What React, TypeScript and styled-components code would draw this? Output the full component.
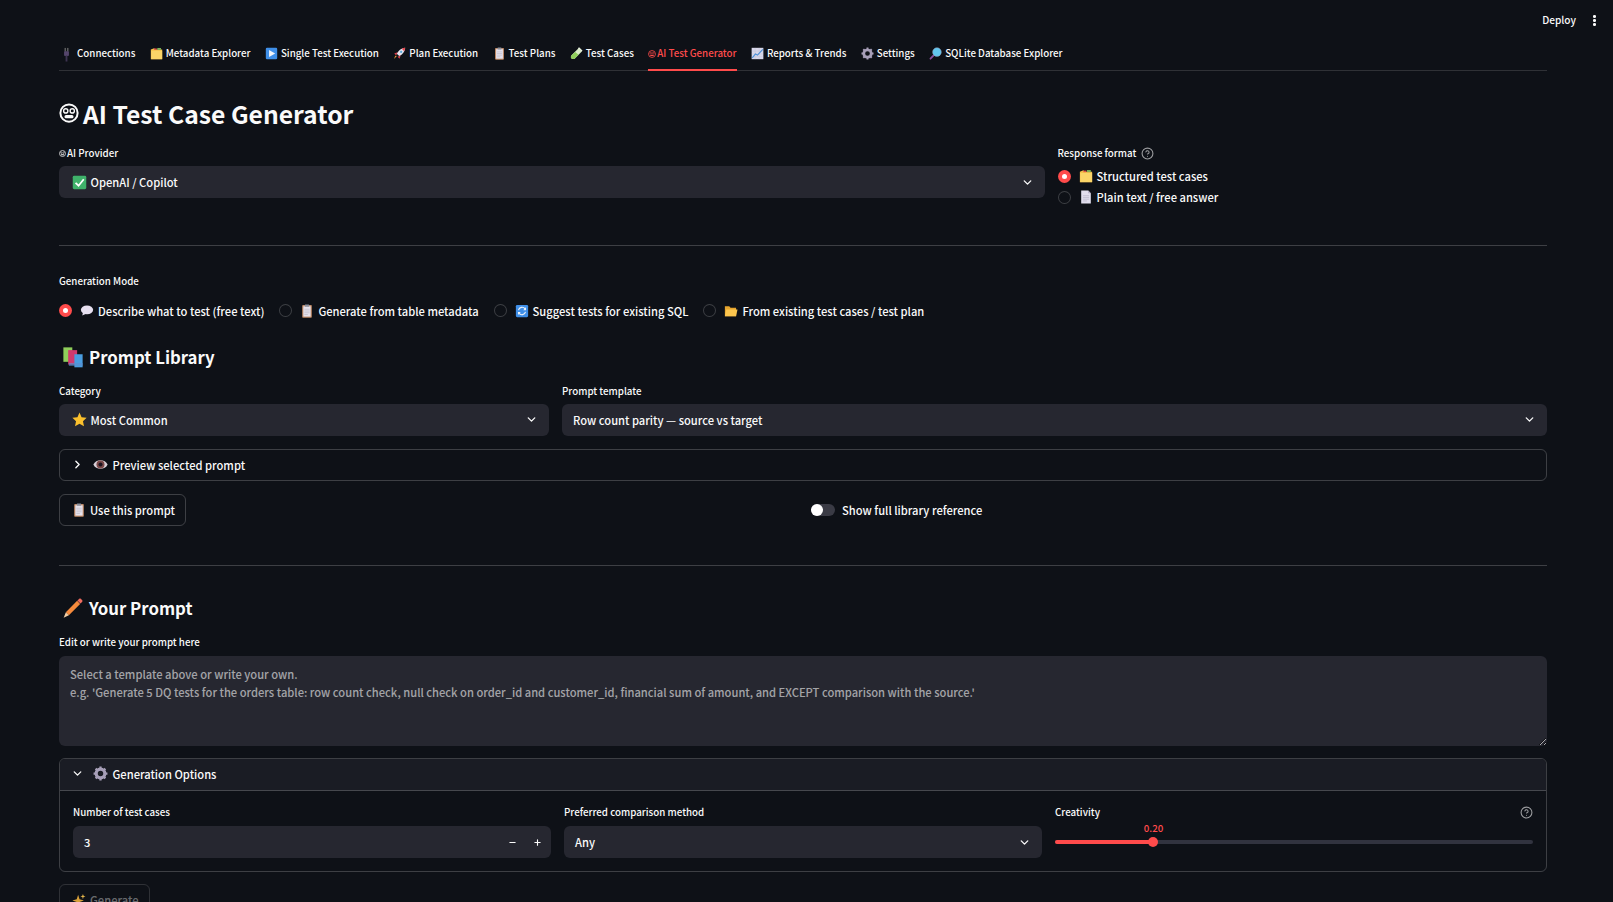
import React from "react";
import styled, { createGlobalStyle } from "styled-components";
import { ChevronDown, ChevronRight, CircleHelp, Minus, Plus } from "lucide-react";

const Global = createGlobalStyle`
  html, body { margin: 0; padding: 0; background: #0e1117; }
  * { box-sizing: border-box; }
  body { font-family: "Noto Sans CJK SC", "Noto Sans", sans-serif; color: #fafafa; font-weight: 500; }
`;

const Page = styled.div`
  position: relative;
  height: 902px;
  overflow: hidden;
  padding: 0 66px 0 59px;
  background: #0e1117;
`;
const TopActions = styled.div`
  position: absolute;
  top: 10px;
  right: 17px;
  display: flex;
  align-items: center;
  gap: 17px;
  font-size: 10.1px;
  line-height: 20px;
`;
const Kebab = styled.span`
  display: flex;
  flex-direction: column;
  gap: 1.2px;
  width: 3px;
  margin-top: 1px;
  i { display: block; width: 2.6px; height: 2.6px; border-radius: 50%; background: #fafafa; }
`;
const TabBar = styled.nav`
  display: flex;
  gap: 14.4px;
  margin-top: 36px;
  height: 35px;
  border-bottom: 1px solid rgba(250, 250, 250, 0.14);
`;
const Tab = styled.div<{ $active?: boolean }>`
  display: flex;
  align-items: flex-start;
  gap: ${(p) => (p.$active ? "1px" : "3px")};
  height: 35px;
  padding-top: 9px;
  font-size: 9.75px;
  line-height: 17px;
  white-space: nowrap;
  color: ${(p) => (p.$active ? "#ff4b4b" : "#fafafa")};
  border-bottom: 2px solid ${(p) => (p.$active ? "#ff4b4b" : "transparent")};
  svg { margin-top: ${(p) => (p.$active ? "4.5px" : "1.5px")}; }
`;
const Title = styled.h1`
  display: flex;
  align-items: center;
  gap: 4px;
  margin: 24px 0 0;
  font-size: 24.7px;
  line-height: 36px;
  font-weight: 700;
`;
const ProviderRow = styled.div`
  display: grid;
  grid-template-columns: 986px 1fr;
  gap: 12.5px;
  margin-top: 14px;
`;
const Label = styled.div`
  display: flex;
  align-items: center;
  gap: 1px;
  height: 16px;
  margin-bottom: 5px;
  font-size: 9.75px;
  line-height: 16px;
`;
const FieldLabel = styled(Label)`
  margin-bottom: 6px;
`;
const HelpRow = styled(Label)<{ $spread?: boolean }>`
  gap: 5px;
  justify-content: ${(p) => (p.$spread ? "space-between" : "flex-start")};
  margin-bottom: ${(p) => (p.$spread ? "6px" : "5px")};
`;
const Select = styled.div`
  display: flex;
  align-items: center;
  justify-content: space-between;
  height: 32px;
  padding: 0 11px;
  border-radius: 6px;
  background: #262730;
  font-size: 11.18px;
`;
const SelectValue = styled.span`
  display: flex;
  align-items: center;
  gap: 3.5px;
  white-space: nowrap;
  svg { margin-left: 2px; }
`;
const RadioStack = styled.div`
  display: flex;
  flex-direction: column;
  gap: 1px;
  margin-top: 1px;
`;
const RadioItem = styled.div`
  display: flex;
  align-items: center;
  height: 20px;
  font-size: 11.18px;
  white-space: nowrap;
`;
const RadioDot = styled.span<{ $on?: boolean }>`
  display: flex;
  align-items: center;
  justify-content: center;
  flex: none;
  width: 13px;
  height: 13px;
  margin-right: 8px;
  border-radius: 50%;
  background: ${(p) => (p.$on ? "#ff4b4b" : "#0e1117")};
  border: ${(p) => (p.$on ? "none" : "1px solid rgba(250,250,250,0.2)")};
  &::after {
    content: "";
    display: ${(p) => (p.$on ? "block" : "none")};
    width: 5px;
    height: 5px;
    border-radius: 50%;
    background: #fff;
  }
`;
const RadioText = styled.span`
  margin-left: 4px;
`;
const Divider = styled.hr<{ $top: number }>`
  margin: ${(p) => p.$top}px 0 0;
  height: 1px;
  border: none;
  background: rgba(250, 250, 250, 0.2);
`;
const ModeLabel = styled(Label)`
  margin: 27px 0 0;
`;
const RadioRow = styled.div`
  display: flex;
  gap: 15px;
  margin-top: 11.5px;
`;
const Heading = styled.h2<{ $top: number }>`
  display: flex;
  align-items: center;
  gap: 5px;
  margin: ${(p) => p.$top}px 0 0;
  padding-left: 3px;
  font-size: 16.8px;
  line-height: 28px;
  font-weight: 700;
`;
const LibraryRow = styled.div`
  display: grid;
  grid-template-columns: 490px 1fr;
  gap: 13px;
  margin-top: 11.5px;
`;
const Expander = styled.div`
  margin-top: 13.5px;
  border: 1px solid rgba(250, 250, 250, 0.2);
  border-radius: 6px;
  overflow: hidden;
`;
const ExpanderHead = styled.div<{ $open?: boolean }>`
  display: flex;
  align-items: center;
  height: ${(p) => (p.$open ? "32px" : "30px")};
  padding: 0 0 ${(p) => (p.$open ? "2px" : "1px")} 11px;
  font-size: 11.18px;
  background: ${(p) => (p.$open ? "#1a1c24" : "transparent")};
  border-bottom: ${(p) => (p.$open ? "1px solid rgba(250,250,250,0.2)" : "none")};
  span { display: flex; align-items: center; gap: 4.5px; margin-left: 9px; }
`;
const ActionRow = styled.div<{ $top?: number }>`
  display: grid;
  grid-template-columns: 752px 1fr;
  align-items: center;
  margin-top: ${(p) => p.$top ?? 13}px;
`;
const Button = styled.button<{ $disabled?: boolean }>`
  display: flex;
  align-items: center;
  gap: 4px;
  width: max-content;
  height: 32px;
  padding: 0 10px 0 12px;
  border: 1px solid rgba(250, 250, 250, ${(p) => (p.$disabled ? 0.14 : 0.2)});
  border-radius: 6px;
  background: transparent;
  color: ${(p) => (p.$disabled ? "rgba(250,250,250,0.4)" : "#fafafa")};
  font: inherit;
  font-size: 11.18px;
`;
const Toggle = styled.div`
  display: flex;
  align-items: center;
  gap: 7px;
  font-size: 11.18px;
`;
const ToggleTrack = styled.span`
  display: flex;
  align-items: center;
  width: 24px;
  height: 12px;
  border-radius: 6px;
  background: #3a3b45;
  &::before {
    content: "";
    width: 12px;
    height: 12px;
    border-radius: 50%;
    background: #fff;
  }
`;
const PromptField = styled.div`
  margin-top: 12px;
`;
const Prompt = styled.textarea`
  display: block;
  width: 100%;
  height: 90px;
  padding: 9px 11px;
  border: none;
  border-radius: 6px;
  background: #262730;
  color: #fafafa;
  font: inherit;
  font-size: 11.18px;
  line-height: 18px;
  resize: vertical;
  outline: none;
  &::placeholder { color: rgba(250, 250, 250, 0.6); opacity: 1; }
`;
const PromptExpander = styled(Expander)`
  margin-top: 12px;
`;
const OptionsBody = styled.div`
  display: grid;
  grid-template-columns: repeat(3, 478px);
  gap: 13px;
  padding: 13px 13px 13px;
`;
const NumberBox = styled(Select)`
  padding-right: 9px;
`;
const Steppers = styled.span`
  display: flex;
  gap: 16px;
  svg { display: block; }
`;
const Slider = styled.div`
  position: relative;
  height: 32px;
`;
const SliderValue = styled.span<{ $left: number }>`
  position: absolute;
  top: -5px;
  left: ${(p) => p.$left}px;
  transform: translateX(-50%);
  color: #ff4b4b;
  font-size: 9.75px;
  line-height: 14px;
`;
const SliderTrack = styled.div`
  position: absolute;
  top: 14px;
  left: 0;
  right: 0;
  height: 4px;
  border-radius: 2px;
  background: #31333f;
`;
const SliderFill = styled.div`
  height: 100%;
  border-radius: 2px 0 0 2px;
  background: #ff4b4b;
`;
const SliderThumb = styled.span`
  position: absolute;
  top: 11px;
  width: 10px;
  height: 10px;
  margin-left: -5px;
  border-radius: 50%;
  background: #ff4b4b;
`;

const Svg = styled.svg<{ $size: number }>`
  display: block;
  flex: none;
  width: ${(p) => p.$size}px;
  height: ${(p) => p.$size}px;
`;

type EmojiName =
  | "plug" | "index" | "play" | "rocket" | "clipboard" | "tube" | "robot" | "chart" | "gear"
  | "search" | "check" | "bubble" | "page" | "refresh" | "folder" | "books" | "star" | "eye"
  | "pencil" | "sparkles";

const shapes: Record<EmojiName, React.ReactNode> = {
  plug: (
    <>
      <rect x="6" y="1" width="1.2" height="4" fill="#777" />
      <rect x="8.8" y="1" width="1.2" height="4" fill="#777" />
      <rect x="5.4" y="4.5" width="5.2" height="5" rx="1" fill="#54456b" />
      <rect x="7" y="9" width="2" height="6.5" fill="#3c3350" />
    </>
  ),
  index: (
    <>
      <path d="M1 3 L5 1.5 L6.5 3 H15 V15 H1 Z" fill="#f5c04a" />
      <path d="M1.5 4.5 H15 V15 H1.5 Z" fill="#fbd568" />
      <rect x="9" y="1.2" width="4.5" height="2.4" fill="#7fb35a" />
      <rect x="5" y="1.8" width="3.4" height="1.8" fill="#e2574c" />
    </>
  ),
  play: (
    <>
      <rect x="1" y="1" width="14" height="14" rx="1.5" fill="#3f8fe8" />
      <path d="M5 3.8 L12.5 8 L5 12.2 Z" fill="#f3f5fa" />
    </>
  ),
  rocket: (
    <>
      <path d="M15 1 C10.5 1.3 6.6 4.3 4.8 8.4 L7.6 11.2 C11.7 9.4 14.7 5.5 15 1 Z" fill="#e3e3ee" />
      <path d="M15 1 C13.4 1.1 12 1.6 10.8 2.3 L13.7 5.2 C14.4 4 14.9 2.6 15 1 Z" fill="#e2474f" />
      <path d="M5.5 6.6 L1.5 8 L4 10.4 Z M9.4 10.5 L8 14.5 L5.6 12 Z" fill="#d8434d" />
      <path d="M4.8 11.2 L1.2 14.8 L2.8 10.8 Z" fill="#f39c3c" />
      <circle cx="10" cy="6" r="1.4" fill="#5aa7d8" />
    </>
  ),
  clipboard: (
    <>
      <rect x="2.5" y="1.2" width="11" height="14.4" rx="1" fill="#c08a66" />
      <rect x="3.8" y="2.6" width="8.4" height="11.8" fill="#e6e2ec" />
      <rect x="5.5" y=".6" width="5" height="2.6" rx=".6" fill="#8b8f9c" />
      <path d="M5 6h6M5 8h6M5 10h6M5 12h4" stroke="#b9b6c4" strokeWidth=".7" />
    </>
  ),
  tube: (
    <>
      <path d="M10.5 1.5 L14.5 5.5 L6 14 C4.8 15.2 2.4 14.9 1.5 13.9 C.7 12.9 1 11 2.2 9.8 Z" fill="#d9ecc6" />
      <path d="M6.5 6 L10.5 9.5 L6 14 C4.8 15.2 2.4 14.9 1.5 13.9 C.7 12.9 1 11 2.2 9.8 Z" fill="#8fce5a" />
      <rect x="9.4" y="1.6" width="6" height="2" transform="rotate(45 12 3)" fill="#e8f1dc" />
    </>
  ),
  robot: (
    <>
      <circle cx="8" cy="8" r="6.9" fill="none" stroke="currentColor" strokeWidth="1.6" />
      <circle cx="5.4" cy="6.3" r="1.7" fill="none" stroke="currentColor" strokeWidth="1.1" />
      <circle cx="10.6" cy="6.3" r="1.7" fill="none" stroke="currentColor" strokeWidth="1.1" />
      <rect x="4.4" y="9.6" width="7.2" height="2.6" rx="1.2" fill="currentColor" />
    </>
  ),
  chart: (
    <>
      <rect x=".8" y="1" width="14.4" height="14" fill="#d8d8ea" />
      <path d="M.8 5h14.4M.8 8.5h14.4M.8 12h14.4M5 1v14M10 1v14" stroke="#b7b7cf" strokeWidth=".4" />
      <path d="M1.5 13.5 L5.5 8.5 L8 10 L14.5 3" fill="none" stroke="#4a90d8" strokeWidth="1.4" />
    </>
  ),
  gear: (
    <>
      <circle cx="8" cy="8" r="4.6" fill="none" stroke="#a79fb8" strokeWidth="3.4" />
      <path
        d="M8 .6v3M8 12.4v3M.6 8h3M12.4 8h3M2.8 2.8l2.2 2.2M11 11l2.2 2.2M13.2 2.8L11 5M5 11l-2.2 2.2"
        stroke="#a79fb8"
        strokeWidth="2.4"
      />
    </>
  ),
  search: (
    <>
      <path d="M6 10 L1.8 14.4" stroke="#8a4f9e" strokeWidth="2.2" strokeLinecap="round" />
      <circle cx="9.8" cy="6.2" r="5.4" fill="#62c6ee" />
      <circle cx="9.8" cy="6.2" r="5.4" fill="none" stroke="#8a95b0" strokeWidth=".6" />
    </>
  ),
  check: (
    <>
      <rect x=".8" y=".8" width="14.4" height="14.4" rx="1.5" fill="#3fb26a" />
      <path d="M3.8 8.3 L7 11.4 L12.5 4.6" fill="none" stroke="#fff" strokeWidth="1.9" />
    </>
  ),
  bubble: (
    <>
      <ellipse cx="8" cy="6.7" rx="7" ry="4.9" fill="#e7e0f0" />
      <path d="M3.5 9.5 L2.6 13 L7 11 Z" fill="#e7e0f0" />
    </>
  ),
  page: (
    <>
      <path d="M2.5 .6 H10.5 L13.5 3.6 V15.4 H2.5 Z" fill="#e2dfee" />
      <path d="M10.5 .6 V3.6 H13.5 Z" fill="#b5afc6" />
      <path d="M4.5 6.5h7M4.5 8.5h7M4.5 10.5h7M4.5 12.5h4.5" stroke="#aaa6bd" strokeWidth=".6" />
    </>
  ),
  refresh: (
    <>
      <rect x="1" y="1" width="14" height="14" rx="1.5" fill="#3f8fe8" />
      <path d="M4 7 A4.2 4.2 0 0 1 11.5 5.5 M12 9 A4.2 4.2 0 0 1 4.5 10.5" fill="none" stroke="#eef3fb" strokeWidth="1.3" />
      <path d="M12.6 3.4 V7 H9.4 Z M3.4 12.6 V9 H6.6 Z" fill="#eef3fb" />
    </>
  ),
  folder: (
    <>
      <path d="M1 2.5 H6 L7.5 4.2 H13.8 V14 H1 Z" fill="#e6a52e" />
      <path d="M2.5 6.2 H15.4 L13.8 14 H1 Z" fill="#fcc64e" />
    </>
  ),
  books: (
    <>
      <rect x="1" y="1" width="6.5" height="10.5" fill="#8fce5a" />
      <rect x="4.5" y="3" width="6.5" height="10.5" fill="#d13a6e" />
      <rect x="9" y="6" width="6" height="9.5" fill="#4a9de0" />
      <rect x="5" y="12.4" width="10" height="2" fill="#5a8fd0" opacity=".7" />
    </>
  ),
  star: <path d="M8 .6 L10.2 5.5 L15.6 6.1 L11.7 9.8 L12.8 15.2 L8 12.5 L3.2 15.2 L4.3 9.8 L.4 6.1 L5.8 5.5 Z" fill="#fbc02d" />,
  eye: (
    <>
      <path d="M.4 8 C3 1.8 13 1.8 15.6 8 C13 14.2 3 14.2 .4 8 Z" fill="#d8d0d8" />
      <circle cx="8" cy="8" r="4.3" fill="#7c4a4a" />
      <circle cx="8" cy="8" r="2.2" fill="#1f1520" />
    </>
  ),
  pencil: (
    <>
      <path d="M11 2.8 L13.2 5 L5 13.2 L2.8 11 Z" fill="#f58a3c" />
      <path d="M11.2 2.6 L12.4 1.4 C12.8 1 13.4 1 13.8 1.4 L14.6 2.2 C15 2.6 15 3.2 14.6 3.6 L13.4 4.8 Z" fill="#ef6b5e" />
      <path d="M2.8 11 L5 13.2 L1.2 15 Z" fill="#f3cfa6" />
    </>
  ),
  sparkles: (
    <>
      <path d="M7 2 L8.6 7 L13.6 8.6 L8.6 10.2 L7 15 L5.4 10.2 L.4 8.6 L5.4 7 Z" fill="#d9a13a" />
      <path d="M12.5 1 L13.2 3.2 L15.4 4 L13.2 4.7 L12.5 7 L11.8 4.7 L9.6 4 L11.8 3.2 Z" fill="#e8b94e" />
    </>
  ),
};

const Emoji = ({ name, size = 14 }: { name: EmojiName; size?: number }) => (
  <Svg $size={size} viewBox="0 0 16 16" aria-hidden>
    {shapes[name]}
  </Svg>
);

const tabs: { icon: EmojiName; text: string; active?: boolean; size?: number }[] = [
  { icon: "plug", text: "Connections", size: 15 },
  { icon: "index", text: "Metadata Explorer" },
  { icon: "play", text: "Single Test Execution" },
  { icon: "rocket", text: "Plan Execution" },
  { icon: "clipboard", text: "Test Plans" },
  { icon: "tube", text: "Test Cases" },
  { icon: "robot", text: "AI Test Generator", active: true, size: 8 },
  { icon: "chart", text: "Reports & Trends" },
  { icon: "gear", text: "Settings" },
  { icon: "search", text: "SQLite Database Explorer" },
];

const modes: { icon: EmojiName; text: string; on?: boolean }[] = [
  { icon: "bubble", text: "Describe what to test (free text)", on: true },
  { icon: "clipboard", text: "Generate from table metadata" },
  { icon: "refresh", text: "Suggest tests for existing SQL" },
  { icon: "folder", text: "From existing test cases / test plan" },
];

const Chevron = () => <ChevronDown size={13} strokeWidth={2.5} />;

export default function App() {
  return (
    <Page>
      <Global />
      <TopActions>
        Deploy
        <Kebab>
          <i />
          <i />
          <i />
        </Kebab>
      </TopActions>

      <TabBar>
        {tabs.map((t) => (
          <Tab key={t.text} $active={t.active}>
            <Emoji name={t.icon} size={t.size ?? 13} />
            {t.text}
          </Tab>
        ))}
      </TabBar>

      <Title>
        <Emoji name="robot" size={20} />
        AI Test Case Generator
      </Title>

      <ProviderRow>
        <div>
          <Label>
            <Emoji name="robot" size={7} />
            AI Provider
          </Label>
          <Select>
            <SelectValue>
              <Emoji name="check" size={15} />
              OpenAI / Copilot
            </SelectValue>
            <Chevron />
          </Select>
        </div>
        <div>
          <HelpRow>
            Response format
            <CircleHelp size={13} color="rgba(250,250,250,0.6)" />
          </HelpRow>
          <RadioStack>
            <RadioItem>
              <RadioDot $on />
              <Emoji name="index" />
              <RadioText>Structured test cases</RadioText>
            </RadioItem>
            <RadioItem>
              <RadioDot />
              <Emoji name="page" />
              <RadioText>Plain text / free answer</RadioText>
            </RadioItem>
          </RadioStack>
        </div>
      </ProviderRow>

      <Divider $top={38} />

      <ModeLabel>Generation Mode</ModeLabel>
      <RadioRow>
        {modes.map((m) => (
          <RadioItem key={m.text}>
            <RadioDot $on={m.on} />
            <Emoji name={m.icon} />
            <RadioText>{m.text}</RadioText>
          </RadioItem>
        ))}
      </RadioRow>

      <Heading $top={22.5}>
        <Emoji name="books" size={22} />
        Prompt Library
      </Heading>

      <LibraryRow>
        <div>
          <Label>Category</Label>
          <Select>
            <SelectValue>
              <Emoji name="star" size={15} />
              Most Common
            </SelectValue>
            <Chevron />
          </Select>
        </div>
        <div>
          <Label>Prompt template</Label>
          <Select>
            <SelectValue>Row count parity — source vs target</SelectValue>
            <Chevron />
          </Select>
        </div>
      </LibraryRow>

      <Expander>
        <ExpanderHead>
          <ChevronRight size={13} strokeWidth={2.5} />
          <span>
            <Emoji name="eye" size={15} />
            Preview selected prompt
          </span>
        </ExpanderHead>
      </Expander>

      <ActionRow>
        <Button>
          <Emoji name="clipboard" />
          Use this prompt
        </Button>
        <Toggle>
          <ToggleTrack />
          Show full library reference
        </Toggle>
      </ActionRow>

      <Divider $top={39} />

      <Heading $top={28}>
        <Emoji name="pencil" size={22} />
        Your Prompt
      </Heading>

      <PromptField>
        <FieldLabel>Edit or write your prompt here</FieldLabel>
        <Prompt
          readOnly
          placeholder={
            "Select a template above or write your own.\ne.g. 'Generate 5 DQ tests for the orders table: row count check, null check on order_id and customer_id, financial sum of amount, and EXCEPT comparison with the source.'"
          }
        />
      </PromptField>

      <PromptExpander>
        <ExpanderHead $open>
          <ChevronDown size={13} strokeWidth={2.5} />
          <span>
            <Emoji name="gear" size={15} />
            Generation Options
          </span>
        </ExpanderHead>
        <OptionsBody>
          <div>
            <FieldLabel>Number of test cases</FieldLabel>
            <NumberBox>
              3
              <Steppers>
                <Minus size={9} strokeWidth={3} />
                <Plus size={9} strokeWidth={3} />
              </Steppers>
            </NumberBox>
          </div>
          <div>
            <FieldLabel>Preferred comparison method</FieldLabel>
            <Select>
              <SelectValue>Any</SelectValue>
              <Chevron />
            </Select>
          </div>
          <div>
            <HelpRow $spread>
              Creativity
              <CircleHelp size={13} color="rgba(250,250,250,0.6)" />
            </HelpRow>
            <Slider>
              <SliderValue $left={98.5}>0.20</SliderValue>
              <SliderTrack>
                <SliderFill style={{ width: "20.6%" }} />
              </SliderTrack>
              <SliderThumb style={{ left: "20.6%" }} />
            </Slider>
          </div>
        </OptionsBody>
      </PromptExpander>

      <ActionRow $top={12}>
        <Button $disabled>
          <Emoji name="sparkles" />
          Generate
        </Button>
      </ActionRow>
    </Page>
  );
}
